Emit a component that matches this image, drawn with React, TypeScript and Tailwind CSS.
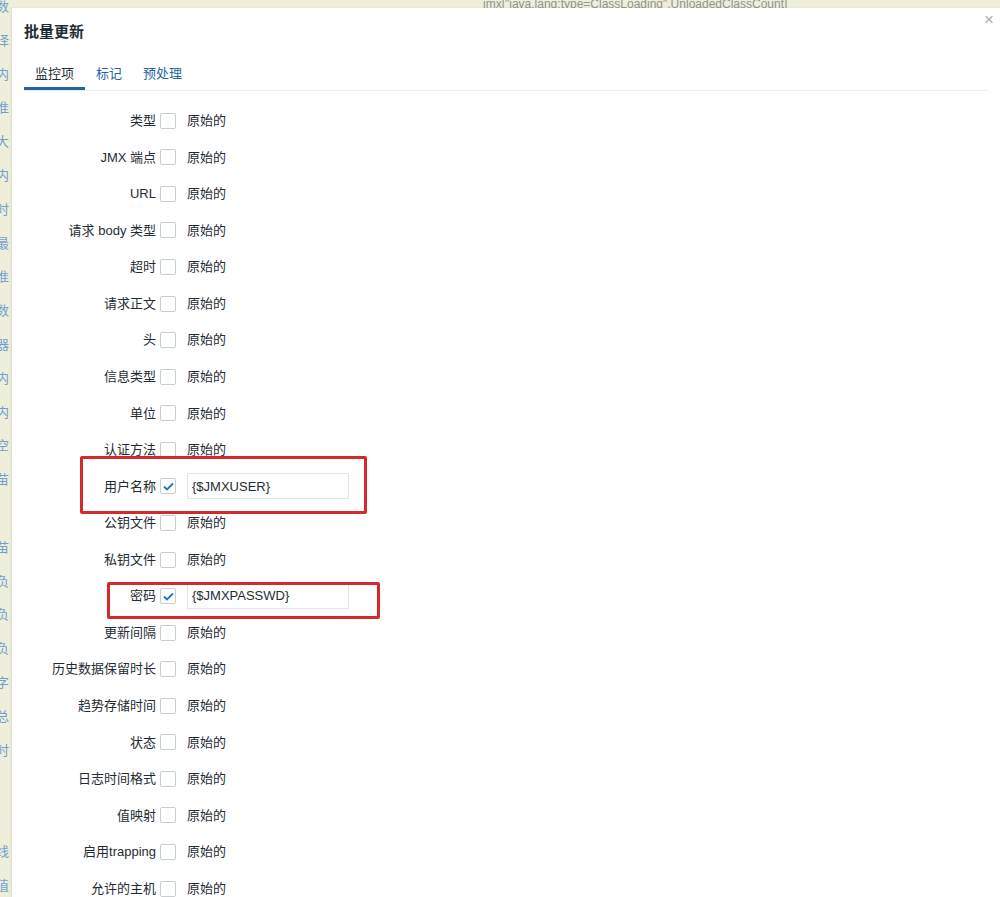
import React from "react";

const ROWS: { label: string; value?: string }[] = [
  { label: "类型" },
  { label: "JMX 端点" },
  { label: "URL" },
  { label: "请求 body 类型" },
  { label: "超时" },
  { label: "请求正文" },
  { label: "头" },
  { label: "信息类型" },
  { label: "单位" },
  { label: "认证方法" },
  { label: "用户名称", value: "{$JMXUSER}" },
  { label: "公钥文件" },
  { label: "私钥文件" },
  { label: "密码", value: "{$JMXPASSWD}" },
  { label: "更新间隔" },
  { label: "历史数据保留时长" },
  { label: "趋势存储时间" },
  { label: "状态" },
  { label: "日志时间格式" },
  { label: "值映射" },
  { label: "启用trapping" },
  { label: "允许的主机" },
];

// clipped text of the page behind the dialog
const BEHIND = [
  "数", "译", "内", "准", "大", "内", "时", "最", "准", "数", "器", "内", "内", "空",
  "苗", "", "苗", "负", "负", "负", "字", "总", "时", "", "", "线", "值",
];

const FONT = "font-['Liberation_Sans','Noto_Sans_CJK_SC',sans-serif]";

function Check({ on }: { on: boolean }) {
  return (
    <span className="w-[16px] h-[16px] border border-[#c5ced3] rounded-[2px] bg-white flex items-center justify-center">
      {on && (
        <svg width="11" height="9" viewBox="0 0 11 9">
          <path d="M1 4.5 L4 7.5 L10 1.5" fill="none" stroke="#1f78c1" strokeWidth="1.8" />
        </svg>
      )}
    </span>
  );
}

export default function App() {
  return (
    <div className={`relative h-[897px] w-[1000px] overflow-hidden bg-[#efeedb] ${FONT}`}>
      {/* top strip of the page behind */}
      <div className="h-[8px] overflow-hidden pl-[483px]">
        <div className="-mt-[3px] text-[12px] leading-[14px] text-[#8e948e] whitespace-nowrap">
          jmx["java.lang:type=ClassLoading",UnloadedClassCount]
        </div>
      </div>

      <div className="flex h-[889px]">
        {/* left strip of the page behind */}
        <div className="w-[12px] overflow-hidden -mt-[8px]">
          <div className="flex flex-col -ml-[4px] text-[13px] text-[#6f9fd0] whitespace-nowrap">
            {BEHIND.map((c, i) => (
              <span key={i} className="h-[33.8px] leading-[13px]">{c}</span>
            ))}
          </div>
        </div>

        {/* dialog */}
        <div className="relative flex-1 bg-white px-[12px] shadow-[-1px_0_2px_rgba(0,0,0,0.08)]">
          <div className="h-[48px] flex items-center text-[15px] font-bold text-[#1f2c33]">
            批量更新
          </div>
          <span className="absolute right-[6px] top-[3px] text-[17px] leading-[17px] text-[#a7b0b5]">×</span>

          <div className="flex h-[35px] border-b border-[#ebeef0] text-[13px]">
            <div className="px-[11px] flex items-center border-b-[3px] border-[#1f65a6] text-[#1f2c33] pt-[5px]">
              监控项
            </div>
            <div className="px-[11px] flex items-center text-[#1f65a6] pt-[2px]">标记</div>
            <div className="px-[10px] flex items-center text-[#1f65a6] pt-[2px]">预处理</div>
          </div>

          <div className="pt-[11.5px] text-[13px] text-[#1f2c33]">
            {ROWS.map((r) => (
              <div key={r.label} className="h-[36.57px] flex items-center">
                <div className="w-[136px] text-right pr-[4px] whitespace-nowrap">{r.label}</div>
                <Check on={!!r.value} />
                {r.value ? (
                  <div className="ml-[11px] w-[162px] h-[26px] border border-[#dfe4e7] flex items-center px-[4px]">
                    {r.value}
                  </div>
                ) : (
                  <span className="ml-[11px]">原始的</span>
                )}
              </div>
            ))}
          </div>
        </div>
      </div>

      {/* red annotation boxes */}
      <div className="absolute left-[80px] top-[456px] w-[287px] h-[58px] border-[3px] border-[#d42a2c] rounded-[2px]" />
      <div className="absolute left-[107px] top-[582px] w-[273px] h-[37px] border-[3px] border-[#d42a2c] rounded-[2px]" />
    </div>
  );
}
